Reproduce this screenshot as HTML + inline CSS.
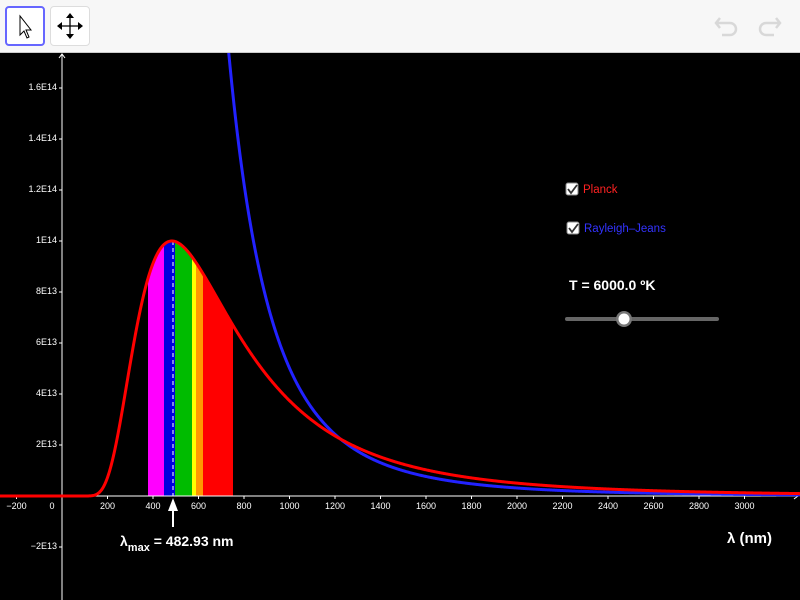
<!DOCTYPE html>
<html><head><meta charset="utf-8"><style>
body{margin:0;width:800px;height:600px;overflow:hidden;background:#000;font-family:"Liberation Sans",sans-serif}
#tb{position:absolute;left:0;top:0;width:800px;height:52px;background:#f7f7f7;border-bottom:1px solid #ccc}
.btn{position:absolute;top:6px;width:38px;height:38px;border-radius:4px;background:#fff}
</style></head><body>
<div id="tb">
<div class="btn" style="left:5px;border:2px solid #6666ff;width:36px;height:36px"><svg width="36" height="36"><path d="M13 8 L13 27 L17 23 L20 30 L22 29 L19 22 L24 22 Z" fill="#fff" stroke="#000" stroke-width="1"/></svg></div>
<div class="btn" style="left:50px;border:1px solid #ddd"><svg width="38" height="38"><path d="M19 8V30M8 19H30" stroke="#000" stroke-width="1.3"/><path d="M19 6l-4 5h8zM19 32l-4-5h8zM6 19l5-4v8zM32 19l-5-4v8z" fill="#000"/></svg></div>
<svg style="position:absolute;left:712px;top:12px" width="72" height="30"><g fill="none" stroke="#d8d8d8" stroke-width="2.5"><path d="M8 6L4 11L8 16M4 11H18a6 6 0 0 1 0 12H10"/><path d="M64 6L68 11L64 16M68 11H54a6 6 0 0 0 0 12H62"/></g></svg>
</div>
<svg id="g" style="position:absolute;left:0;top:53px" width="800" height="547" viewBox="0 53 800 547" font-family="Liberation Sans, sans-serif"></svg>
<script>
var g=document.getElementById('g'),s='';
var X0=62,Y0=496,sx=45.5/200,sy=255/1e14;
function px(l){return X0+l*sx}function py(v){return Y0-v*sy}
var b=2398;function P0(l){return 1/(Math.pow(l,5)*(Math.exp(b/l)-1))}
var A=1e14/P0(482.93);function P(l){return l<=0?0:A*P0(l)}
var K=P(1210)*Math.pow(1210,4)*1.015;function R(l){return K/Math.pow(l,4)}
var bands=[[148,164,'#ff00ff'],[164,175,'#0000dd'],[175,192,'#00bb00'],[192,196,'#ffff00'],[196,203,'#ff9900'],[203,233,'#ff0000']];
bands.forEach(function(c){var d='M'+c[0]+' '+Y0;for(var x=c[0];x<=c[1];x+=0.5){d+=' L'+x+' '+py(P((x-X0)/sx)).toFixed(1)}d+=' L'+c[1]+' '+Y0+'Z';s+='<path d="'+d+'" fill="'+c[2]+'"/>'});
s+='<line x1="173" y1="'+py(1e14)+'" x2="173" y2="496" stroke="#fff" stroke-dasharray="4,3" stroke-width="1"/>';
s+='<line x1="0" y1="496" x2="798" y2="496" stroke="#fff"/><line x1="62" y1="54" x2="62" y2="600" stroke="#fff"/>';
s+='<path d="M794 493L798 496L794 499M59 58L62 54L65 58" stroke="#fff" fill="none"/>';
for(var l=-200;l<=3000;l+=200){var x=px(l);s+='<line x1="'+x+'" y1="496" x2="'+x+'" y2="499" stroke="#fff"/>';s+='<text x="'+(l==0?x-10:x)+'" y="509" fill="#fff" font-size="9" text-anchor="middle">'+(l<0?'\u2212200':l)+'</text>'}
var ys=[[2e13,'2E13'],[4e13,'4E13'],[6e13,'6E13'],[8e13,'8E13'],[1e14,'1E14'],[1.2e14,'1.2E14'],[1.4e14,'1.4E14'],[1.6e14,'1.6E14'],[-2e13,'\u22122E13']];
ys.forEach(function(a){var y=py(a[0]);s+='<line x1="59" y1="'+y+'" x2="62" y2="'+y+'" stroke="#fff"/><text x="57" y="'+(y+2)+'" fill="#fff" font-size="9" text-anchor="end">'+a[1]+'</text>'});
var d='M0 496 L62 496';for(var x=62.5;x<=800;x+=0.5){d+=' L'+x+' '+py(P((x-X0)/sx)).toFixed(2)}
var r='';for(var x=225;x<=800;x+=0.5){var y=py(R((x-X0)/sx));if(y<40)continue;r+=(r?' L':'M')+x+' '+y.toFixed(2)}
s+='<path d="'+r+'" fill="none" stroke="#2222ff" stroke-width="3"/>';
s+='<path d="'+d+'" fill="none" stroke="#ff0000" stroke-width="3"/>';
s+='<line x1="173" y1="503" x2="173" y2="527" stroke="#fff" stroke-width="2"/><path d="M168 511L173 498L178 511Z" fill="#fff"/>';
s+='<text x="120" y="546" fill="#fff" font-size="14" font-weight="bold">\u03bb<tspan font-size="11" dy="5">max</tspan><tspan dy="-5"> = 482.93 nm</tspan></text>';
s+='<text x="727" y="543" fill="#fff" font-size="15" font-weight="bold">\u03bb (nm)</text>';
function cb(x,y){return '<rect x="'+x+'" y="'+y+'" width="12" height="12" rx="2" fill="#fff" stroke="#888"/><path d="M'+(x+2)+' '+(y+6)+'l3 4l6-8" stroke="#333" stroke-width="1.8" fill="none"/>'}
s+=cb(566,183)+'<text x="583" y="193" fill="#ff2222" font-size="11.5">Planck</text>';
s+=cb(567,222)+'<text x="584" y="232" fill="#3333ff" font-size="11.5">Rayleigh\u2013Jeans</text>';
s+='<text x="569" y="290" fill="#fff" font-size="14" font-weight="bold">T = 6000.0 \u00baK</text>';
s+='<line x1="567" y1="319" x2="717" y2="319" stroke="#666" stroke-width="4" stroke-linecap="round"/><circle cx="624" cy="319" r="8" fill="#777"/><circle cx="624" cy="319" r="5.5" fill="#fff"/>';
g.innerHTML=s;
</script>
</body></html>
